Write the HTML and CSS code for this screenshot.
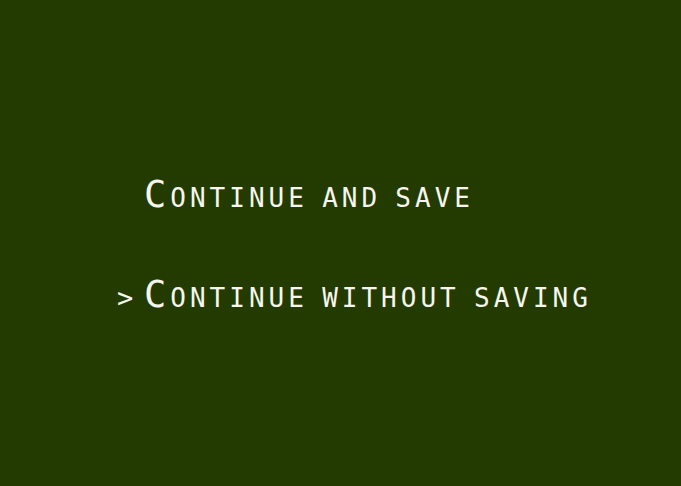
FILE: index.html
```html
<!DOCTYPE html>
<html>
<head>
<meta charset="utf-8">
<link rel="stylesheet" href="styles.css">
</head>
<body>
<div class="screen">
  <ul class="menu">
    <li class="item"><span class="marker"></span><span class="label">Continue and save</span></li>
    <li class="item selected"><span class="marker">&gt;</span><span class="label">Continue without saving</span></li>
  </ul>
</div>
</body>
</html>
```
FILE: styles.css
```css
html, body {
  margin: 0;
  padding: 0;
  background: #233b00;
}
.screen {
  width: 681px;
  height: 486px;
  box-sizing: border-box;
  padding: 173px 0 0 117px;
  color: #f6f6ee;
  font-family: "DejaVu Sans Mono", "Liberation Mono", monospace;
}
.menu {
  list-style: none;
  margin: 0;
  padding: 0;
  display: flex;
  flex-direction: column;
  gap: 56px;
}
.item {
  display: flex;
  align-items: baseline;
  height: 44px;
  line-height: 44px;
}
.marker {
  width: 27px;
  font-size: 27px;
  flex: none;
}
.label {
  font-size: 37px;
  font-variant: small-caps;
  letter-spacing: 4px;
  word-spacing: -12px;
}
```
